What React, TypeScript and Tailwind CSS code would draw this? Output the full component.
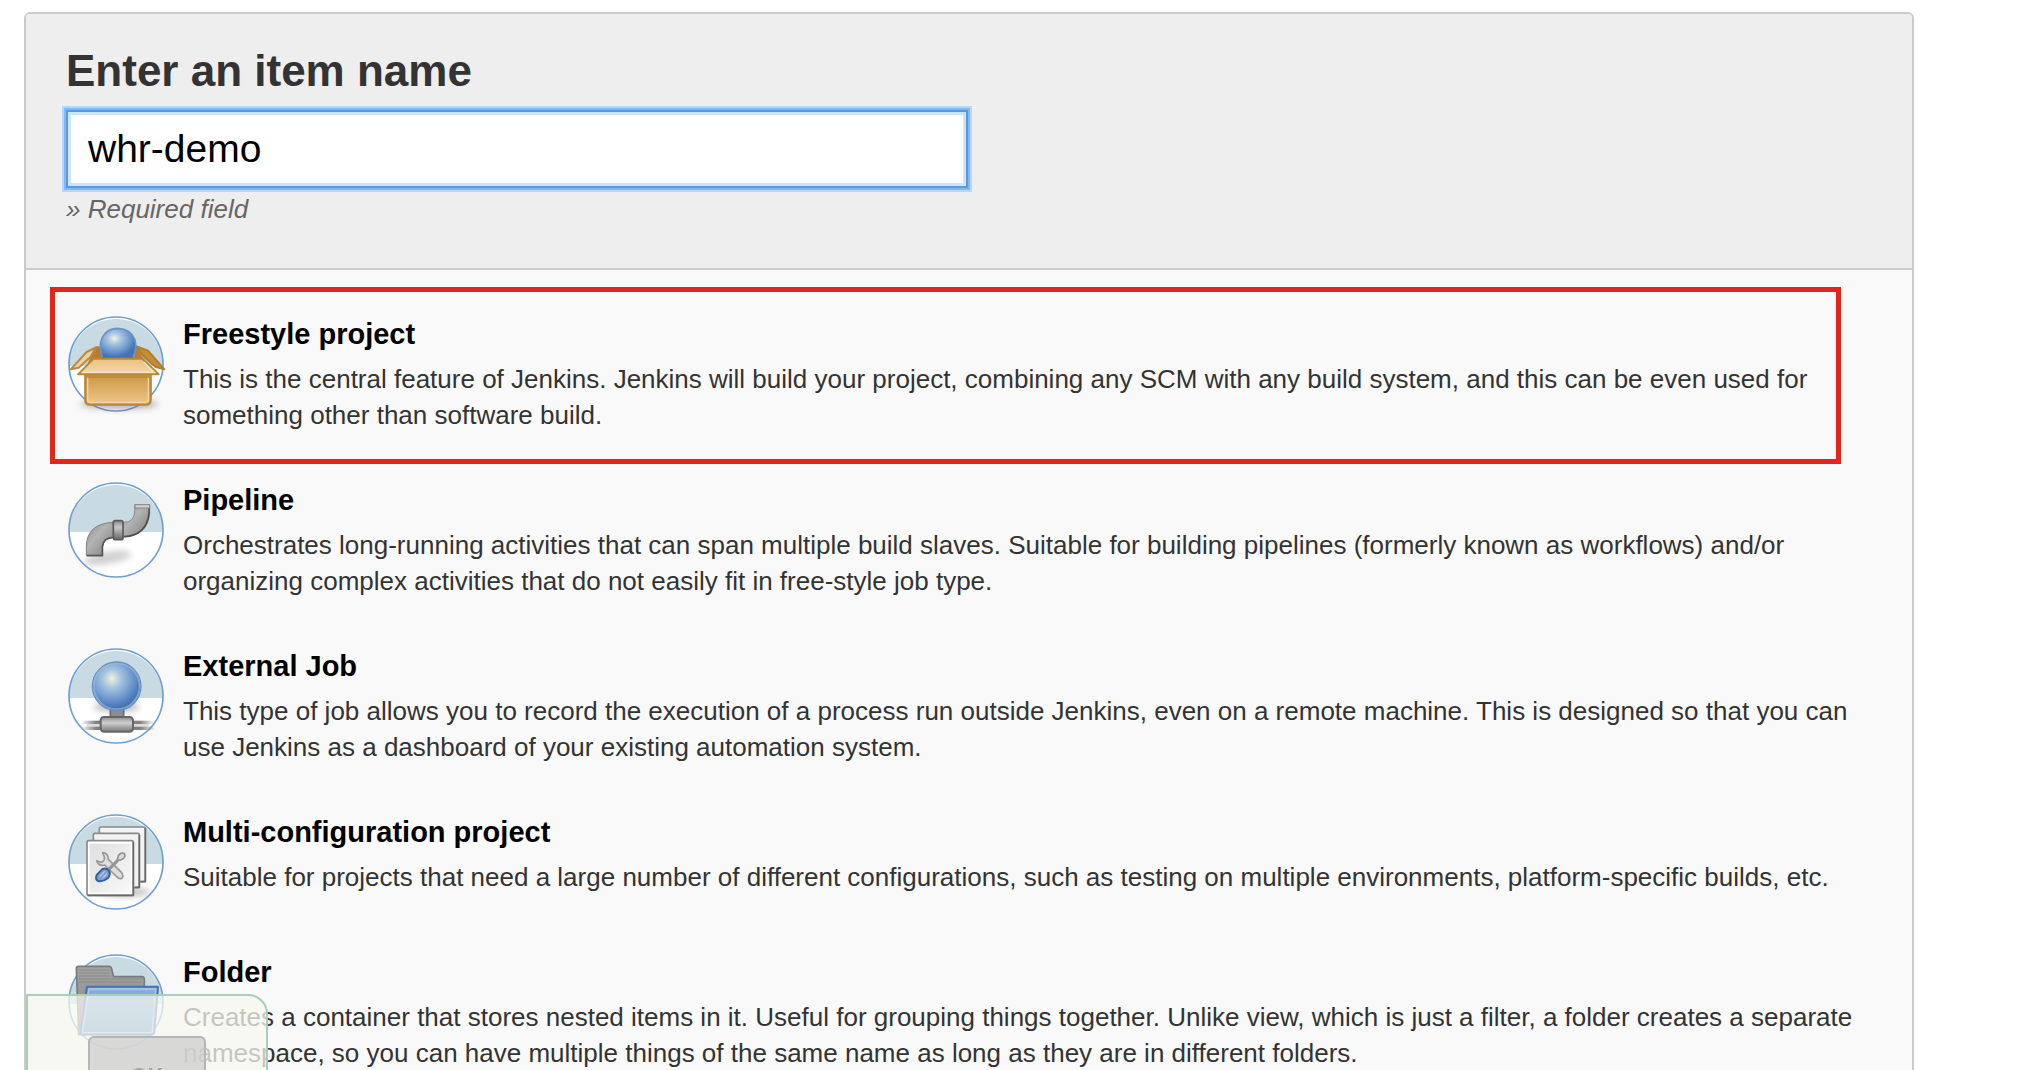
import { ReactNode, useState } from "react";

interface BadgeProps {
  x: number;
  y: number;
  children: ReactNode;
}

// round blue / white plate that every item icon sits on
function Badge({ x, y, children }: BadgeProps) {
  const cx = x + 144;
  const cy = y + 144;
  return (
    <svg
      className="size-24 shrink-0 overflow-visible"
      viewBox={`${x} ${y} 288 288`}
      aria-hidden="true"
    >
      <circle cx={cx} cy={cy} r="141" fill="#fff" />
      <path
        d={`M${cx - 141} ${y + 150}A141 141 0 1 1 ${cx + 141} ${y + 150}Z`}
        fill="#c8dbe3"
      />
      <circle
        cx={cx}
        cy={cy}
        r="141"
        fill="none"
        stroke="#6f9fd2"
        strokeWidth="5"
      />
      {children}
    </svg>
  );
}

function FreestyleIcon() {
  return (
    <Badge x={54} y={48}>
      <defs>
        <radialGradient id="ball" cx=".4" cy=".34" r=".62">
          <stop offset="0" stopColor="#f1f3dc" />
          <stop offset=".3" stopColor="#a9c6e0" />
          <stop offset=".7" stopColor="#6c98cd" />
          <stop offset="1" stopColor="#4674b3" />
        </radialGradient>
        <linearGradient id="boxFront" x1="0" y1="0" x2="0" y2="1">
          <stop offset="0" stopColor="#c99440" />
          <stop offset=".5" stopColor="#dcae66" />
          <stop offset="1" stopColor="#efc88c" />
        </linearGradient>
        <linearGradient id="boxFlap" x1="0" y1="0" x2="0" y2="1">
          <stop offset="0" stopColor="#eac080" />
          <stop offset="1" stopColor="#f5d9ad" />
        </linearGradient>
        <filter id="soft" x="-30%" y="-80%" width="160%" height="260%">
          <feGaussianBlur stdDeviation="9" />
        </filter>
      </defs>
      <ellipse
        cx="208"
        cy="312"
        rx="116"
        ry="15"
        fill="#555"
        opacity=".45"
        filter="url(#soft)"
      />
      <path
        d="M140 142L256 140L282 184L118 186Z"
        fill="#b77d2b"
        stroke="#b5843b"
        strokeWidth="6"
      />
      <path
        d="M138 142L110 156L62 208L86 203L122 170Z"
        fill="#f0cf9c"
        stroke="#b88a42"
        strokeWidth="6"
        strokeLinejoin="round"
      />
      <path
        d="M256 138L294 152L343 208L316 200L286 174Z"
        fill="#c88c34"
        stroke="#b07d31"
        strokeWidth="6"
        strokeLinejoin="round"
      />
      <path
        d="M157 174Q146 140 154 120Q167 85 204 85Q242 87 255 119Q262 145 249 174Z"
        fill="url(#ball)"
      />
      <path
        d="M157 172Q146 140 154 120Q167 85 204 85Q242 87 255 119Q262 145 249 172"
        fill="none"
        stroke="#6f93c7"
        strokeWidth="5"
      />
      <path
        d="M106 220V300Q106 314 121 314H286Q302 314 302 300V220Z"
        fill="url(#boxFront)"
        stroke="#b9873b"
        strokeWidth="7"
      />
      <path
        d="M113 230V298Q113 307 123 307H285Q295 307 295 298V230"
        fill="none"
        stroke="#f2d3a2"
        strokeWidth="4"
      />
      <path d="M110 226H298V234H110Z" fill="#b88234" opacity=".6" />
      <path
        d="M131 176H277L326 223H84Z"
        fill="url(#boxFlap)"
        stroke="#b9873b"
        strokeWidth="6"
        strokeLinejoin="round"
      />
      <path d="M97 217H313L282 187" fill="none" stroke="#fae6c6" strokeWidth="4" />
    </Badge>
  );
}

function PipelineIcon() {
  return (
    <Badge x={54} y={36}>
      <defs>
        <linearGradient id="pipeA" x1="0" y1="0" x2="1" y2="1">
          <stop offset="0" stopColor="#8b8b8b" />
          <stop offset=".4" stopColor="#b4b4b4" />
          <stop offset="1" stopColor="#7b7b7b" />
        </linearGradient>
        <linearGradient id="collar" x1="0" y1="0" x2="0" y2="1">
          <stop offset="0" stopColor="#888" />
          <stop offset=".35" stopColor="#c9c9c9" />
          <stop offset="1" stopColor="#666" />
        </linearGradient>
      </defs>
      <ellipse
        cx="172"
        cy="264"
        rx="72"
        ry="18"
        transform="rotate(-10 172 264)"
        fill="#777"
        opacity=".35"
        filter="url(#soft)"
      />
      <path
        d="M219 157Q254 158 254 122V104H299V130Q293 198 219 201Z"
        fill="url(#pipeA)"
        stroke="#8f8f8f"
        strokeWidth="3"
      />
      <path
        d="M297 106V130Q290 196 222 200"
        fill="none"
        stroke="#505050"
        strokeWidth="5"
      />
      <path
        d="M190 157Q111 161 109 228V256H158V230Q160 202 190 202Z"
        fill="url(#pipeA)"
        stroke="#808080"
        strokeWidth="3"
      />
      <path
        d="M110 257H157V230Q160 203 190 202"
        fill="none"
        stroke="#555"
        strokeWidth="5"
      />
      <path d="M255 104H299V114H255Z" fill="#d0d0d0" stroke="#888" strokeWidth="3" />
      <rect
        x="190"
        y="152"
        width="29"
        height="57"
        rx="6"
        fill="url(#collar)"
        stroke="#5c5c5c"
        strokeWidth="5"
      />
    </Badge>
  );
}

function ExternalJobIcon() {
  return (
    <Badge x={54} y={39}>
      <defs>
        <linearGradient id="cable" x1="0" y1="0" x2="1" y2="0">
          <stop offset="0" stopColor="#777" stopOpacity="0" />
          <stop offset=".2" stopColor="#808080" />
          <stop offset=".8" stopColor="#808080" />
          <stop offset="1" stopColor="#777" stopOpacity="0" />
        </linearGradient>
        <linearGradient id="plug" x1="0" y1="0" x2="0" y2="1">
          <stop offset="0" stopColor="#8c8c8c" />
          <stop offset=".4" stopColor="#cfcfcf" />
          <stop offset="1" stopColor="#777" />
        </linearGradient>
      </defs>
      <ellipse
        cx="200"
        cy="215"
        rx="68"
        ry="15"
        fill="#777"
        opacity=".5"
        filter="url(#soft)"
      />
      <rect x="94" y="257" width="218" height="10" fill="url(#cable)" />
      <rect x="110" y="267" width="186" height="8" fill="#d5d5d5" opacity=".8" />
      <rect x="94" y="275" width="222" height="10" fill="url(#cable)" />
      <path d="M181 222H221V248H181Z" fill="#8d8d8d" stroke="#6c6c6c" strokeWidth="5" />
      <rect
        x="152"
        y="246"
        width="97"
        height="44"
        rx="10"
        fill="url(#plug)"
        stroke="#656565"
        strokeWidth="6"
      />
      <circle cx="200" cy="154" r="71" fill="url(#ball)" />
      <circle
        cx="200"
        cy="154"
        r="73"
        fill="none"
        stroke="#6a90c6"
        strokeWidth="4"
      />
      <circle
        cx="200"
        cy="154"
        r="68"
        fill="none"
        stroke="#9dbbdf"
        strokeWidth="4"
        opacity=".7"
      />
    </Badge>
  );
}

function MatrixIcon() {
  return (
    <Badge x={54} y={42}>
      <defs>
        <linearGradient id="sheet" x1="0" y1="0" x2="1" y2="1">
          <stop offset="0" stopColor="#dfdfdf" />
          <stop offset="1" stopColor="#f8f8f8" />
        </linearGradient>
      </defs>
      <ellipse
        cx="222"
        cy="276"
        rx="80"
        ry="14"
        fill="#666"
        opacity=".4"
        filter="url(#soft)"
      />
      <g stroke="#8a8a8a" strokeWidth="5">
        <rect x="148" y="81" width="138" height="164" rx="5" fill="#f3f3f3" />
        <rect x="130" y="100" width="138" height="163" rx="5" fill="#f3f3f3" />
        <rect x="111" y="122" width="139" height="164" rx="5" fill="#fff" />
      </g>
      <path
        d="M286 84V245H272M268 104V262H254M250 126V286H113"
        fill="none"
        stroke="#6a6a6a"
        strokeWidth="5"
      />
      <rect x="119" y="131" width="123" height="147" fill="url(#sheet)" />
      <path
        d="M158 158Q175 160 175 178L215 218Q223 230 214 236Q206 238 198 228L164 195Q146 200 140 182L153 187Q165 184 163 171Z"
        fill="#dedede"
        stroke="#989898"
        strokeWidth="5"
        strokeLinejoin="round"
      />
      <path d="M167 218L203 181" stroke="#959595" strokeWidth="10" />
      <path
        d="M203 181Q202 166 213 160Q225 157 225 168Q221 180 203 181Z"
        fill="#dcdcdc"
        stroke="#929292"
        strokeWidth="5"
      />
      <path
        d="M157 207Q170 202 177 213Q183 223 173 235Q158 247 144 243Q135 238 140 225Z"
        fill="#7f9fcd"
        stroke="#365f9f"
        strokeWidth="6"
      />
      <path
        d="M149 230L164 214M158 235L171 221"
        stroke="#b5c9e4"
        strokeWidth="4"
      />
    </Badge>
  );
}

function FolderIcon() {
  return (
    <Badge x={174} y={72}>
      <defs>
        <linearGradient id="folderBack" x1="0" y1="0" x2="0" y2="1">
          <stop offset="0" stopColor="#a4a4a4" />
          <stop offset="1" stopColor="#808080" />
        </linearGradient>
        <linearGradient id="folderFront" x1="0" y1="0" x2="0" y2="1">
          <stop offset="0" stopColor="#8cb0df" />
          <stop offset="1" stopColor="#5f91cd" />
        </linearGradient>
      </defs>
      <path
        d="M206 314V306L199 116Q199 109 206 109H296Q304 109 305 118L310 137Q312 140 318 140H396Q403 140 403 148V300Z"
        fill="url(#folderBack)"
        stroke="#7a7a7a"
        strokeWidth="5"
      />
      <path
        d="M206 120H298M206 129H300M206 138H303M206 147H397M206 156H397"
        stroke="#8a8a8a"
        strokeWidth="3"
      />
      <path
        d="M231 170H444L433 306Q431 314 422 314H216Q210 314 211 306Z"
        fill="url(#folderFront)"
        stroke="#4472b4"
        strokeWidth="6"
        strokeLinejoin="round"
      />
      <path
        d="M237 177H437L427 304Q426 308 420 308H217Z"
        fill="none"
        stroke="#adc8ea"
        strokeWidth="4"
      />
    </Badge>
  );
}

const items = [
  {
    id: "freestyle",
    title: "Freestyle project",
    text: "This is the central feature of Jenkins. Jenkins will build your project, combining any SCM with any build system, and this can be even used for something other than software build.",
    icon: <FreestyleIcon />,
  },
  {
    id: "pipeline",
    title: "Pipeline",
    text: "Orchestrates long-running activities that can span multiple build slaves. Suitable for building pipelines (formerly known as workflows) and/or organizing complex activities that do not easily fit in free-style job type.",
    icon: <PipelineIcon />,
  },
  {
    id: "external",
    title: "External Job",
    text: "This type of job allows you to record the execution of a process run outside Jenkins, even on a remote machine. This is designed so that you can use Jenkins as a dashboard of your existing automation system.",
    icon: <ExternalJobIcon />,
  },
  {
    id: "matrix",
    title: "Multi-configuration project",
    text: "Suitable for projects that need a large number of different configurations, such as testing on multiple environments, platform-specific builds, etc.",
    icon: <MatrixIcon />,
  },
  {
    id: "folder",
    title: "Folder",
    text: "Creates a container that stores nested items in it. Useful for grouping things together. Unlike view, which is just a filter, a folder creates a separate namespace, so you can have multiple things of the same name as long as they are in different folders.",
    icon: <FolderIcon />,
  },
];

function App() {
  const [name, setName] = useState("whr-demo");
  const [mode, setMode] = useState("");

  return (
    <div className="h-screen overflow-hidden bg-white pt-3 pl-6 pr-[114px] font-['Liberation_Sans',Arial,sans-serif] text-[#333]">
      <form
        className="rounded-md border-2 border-[#cacaca] bg-[#f9f9f9]"
        onSubmit={(e) => e.preventDefault()}
      >
        <div className="flex flex-col items-start rounded-t border-b-2 border-[#cacaca] bg-[#eee] px-10 pt-8 pb-10">
          <label
            htmlFor="name"
            className="text-[44px] leading-[50px] font-bold"
          >
            Enter an item name
          </label>
          <input
            id="name"
            type="text"
            className="mt-[14px] h-[78px] w-1/2 max-w-[902px] border-2 border-[#5b99dd] bg-white px-5 text-[39px] text-black outline-none shadow-[0_0_0_2px_#83b9f3,0_0_0_4px_#b9d6f5,inset_0_0_0_3px_#cde4fb]"
            value={name}
            onChange={(e) => setName(e.target.value)}
          />
          <p className="mt-[3px] mb-px text-[26px] leading-9 text-[#666] italic">
            » Required field
          </p>
        </div>
        <ul className="py-6 pr-[37px] pl-[42px]">
          {items.map((item) => (
            <li key={item.id} className="relative">
              <label htmlFor={item.id} className="flex gap-[19px] py-[22px]">
                <input
                  id={item.id}
                  type="radio"
                  name="mode"
                  className="sr-only"
                  checked={mode === item.id}
                  onChange={() => setMode(item.id)}
                />
                {item.icon}
                <span className="block pb-[5px]">
                  <span className="block text-[29px] leading-9 font-bold text-black">
                    {item.title}
                  </span>
                  <span className="mt-[9px] block text-[26px] leading-9">
                    {item.text}
                  </span>
                </span>
              </label>
              {item.id === "freestyle" && (
                <div className="pointer-events-none absolute -top-[7px] right-[34px] -bottom-1 -left-[18px] border-5 border-[#e32619]" />
              )}
            </li>
          ))}
        </ul>
        <div className="fixed -bottom-16 left-[26px] rounded-tr-[20px] border-2 border-[#a8cdb9] bg-[#f5f7ed]/75 px-[60px] pt-10 pb-[18px]">
          <button
            type="submit"
            className="h-[78px] w-[118px] rounded-md border-2 border-[#b5b5b5] bg-[#cdcdcd]/75 text-[22px] font-bold text-[#a6a6a6]"
          >
            OK
          </button>
        </div>
      </form>
    </div>
  );
}

export default App;
